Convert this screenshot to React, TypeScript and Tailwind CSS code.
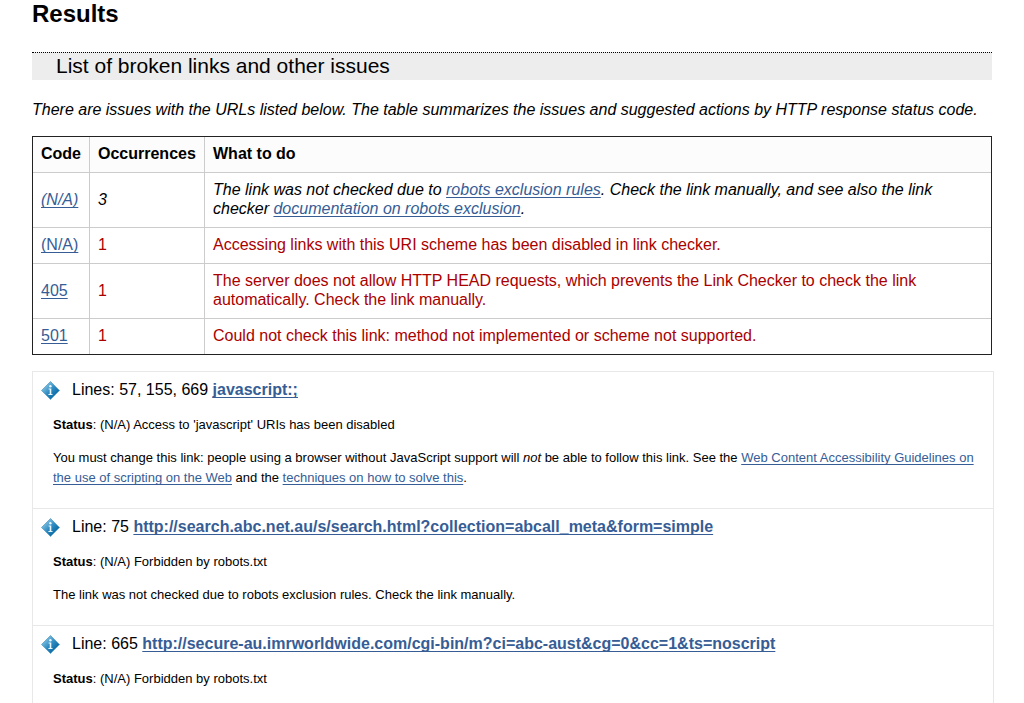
import type { ReactNode } from "react";

function Link({ children }: { children: ReactNode }) {
  return (
    <a
      href="#"
      className="text-[#365d95] underline decoration-1 underline-offset-2 [text-decoration-skip-ink:none] hover:text-[#1f3d68]"
    >
      {children}
    </a>
  );
}

function InfoIcon() {
  return (
    <svg viewBox="0 0 19 19" className="size-[19px] shrink-0" role="img" aria-label="Info">
      <defs>
        <linearGradient id="info-fill" x1="0" y1="0" x2="1" y2="1">
          <stop offset="0.2" stopColor="#7fbfe0" />
          <stop offset="0.5" stopColor="#2f8cc2" />
          <stop offset="0.8" stopColor="#0968a3" />
        </linearGradient>
      </defs>
      <path
        d="M9.5.5 18.5 9.5 9.5 18.5.5 9.5Z"
        fill="url(#info-fill)"
        stroke="#5b9fc6"
        strokeWidth="0.8"
        strokeLinejoin="round"
      />
      <circle cx="9.4" cy="5.2" r="1.2" fill="#e9f6fc" />
      <path d="M7.6 7.4h2.7v5.6h1.2v1.1H7.4v-1.1h1.3V8.5H7.6Z" fill="#e9f6fc" />
    </svg>
  );
}

type Row = { code: string; count: number; advice: ReactNode; tone: string };

const rows: Row[] = [
  {
    code: "(N/A)",
    count: 3,
    tone: "italic text-black",
    advice: (
      <>
        The link was not checked due to <Link>robots exclusion rules</Link>. Check the link manually, and see also the
        link checker <Link>documentation on robots exclusion</Link>.
      </>
    ),
  },
  {
    code: "(N/A)",
    count: 1,
    tone: "text-[#aa0000]",
    advice: "Accessing links with this URI scheme has been disabled in link checker.",
  },
  {
    code: "405",
    count: 1,
    tone: "text-[#aa0000]",
    advice:
      "The server does not allow HTTP HEAD requests, which prevents the Link Checker to check the link automatically. Check the link manually.",
  },
  {
    code: "501",
    count: 1,
    tone: "text-[#aa0000]",
    advice: "Could not check this link: method not implemented or scheme not supported.",
  },
];

type IssueProps = { lines: string; url: string; status: string; children?: ReactNode };

function Issue({ lines, url, status, children }: IssueProps) {
  return (
    <li className="border-b border-[#e8e8e8] px-2 pt-2 pb-5 last:border-b-0">
      <div className="flex items-center gap-3">
        <InfoIcon />
        <p className="leading-5">
          {lines}{" "}
          <strong>
            <Link>{url}</Link>
          </strong>
        </p>
      </div>
      <div className="mt-[15px] flex flex-col gap-[13px] pl-3 text-[13px] leading-5">
        <p>
          <strong>Status</strong>: (N/A) {status}
        </p>
        {children && <p>{children}</p>}
      </div>
    </li>
  );
}

export default function App() {
  return (
    <main className="h-screen overflow-hidden bg-white px-8 font-['Liberation_Sans',Arial,sans-serif] text-base text-black">
      <h2 className="text-2xl leading-7 font-bold">Results</h2>
      <h3 className="mt-6 border-t border-dotted border-black bg-[#ededed] px-6 pb-0.5 text-[21px] leading-[25px]">
        List of broken links and other issues
      </h3>
      <p className="mt-5 leading-5 italic">
        There are issues with the URLs listed below. The table summarizes the issues and suggested actions by HTTP
        response status code.
      </p>
      <table className="mt-4 w-full border-separate border-spacing-0 border border-[#222222] text-left leading-[19px]">
        <thead>
          <tr className="bg-[#fcfcfc]">
            <th className="w-[57px] border-r border-b border-[#cccccc] px-2 pt-[7px] pb-[9px]">Code</th>
            <th className="w-[115px] border-r border-b border-[#cccccc] px-2 pt-[7px] pb-[9px]">Occurrences</th>
            <th className="border-b border-[#cccccc] px-2 pt-[7px] pb-[9px]">What to do</th>
          </tr>
        </thead>
        <tbody>
          {rows.map((row, i) => (
            <tr key={i} className={row.tone}>
              <td className="border-r border-b border-[#cccccc] px-2 pt-[7px] pb-[9px] [tr:last-child>&]:border-b-0">
                <Link>{row.code}</Link>
              </td>
              <td className="border-r border-b border-[#cccccc] px-2 pt-[7px] pb-[9px] [tr:last-child>&]:border-b-0">
                {row.count}
              </td>
              <td className="border-b border-[#cccccc] px-2 pt-[7px] pr-12 pb-[9px] [tr:last-child>&]:border-b-0">
                {row.advice}
              </td>
            </tr>
          ))}
        </tbody>
      </table>
      <ul className="mt-4 -mr-0.5 border border-[#e8e8e8]">
        <Issue lines="Lines: 57, 155, 669" url="javascript:;" status="Access to 'javascript' URIs has been disabled">
          You must change this link: people using a browser without JavaScript support will <em>not</em> be able to
          follow this link. See the <Link>Web Content Accessibility Guidelines on the use of scripting on the Web</Link>{" "}
          and the <Link>techniques on how to solve this</Link>.
        </Issue>
        <Issue
          lines="Line: 75"
          url="http://search.abc.net.au/s/search.html?collection=abcall_meta&form=simple"
          status="Forbidden by robots.txt"
        >
          The link was not checked due to robots exclusion rules. Check the link manually.
        </Issue>
        <li className="px-2 pt-2 pb-10">
          <div className="flex items-center gap-3">
            <InfoIcon />
            <p className="leading-5">
              Line: 665{" "}
              <strong>
                <Link>http://secure-au.imrworldwide.com/cgi-bin/m?ci=abc-aust&cg=0&cc=1&ts=noscript</Link>
              </strong>
            </p>
          </div>
          <p className="mt-[15px] pl-3 text-[13px] leading-5">
            <strong>Status</strong>: (N/A) Forbidden by robots.txt
          </p>
        </li>
      </ul>
    </main>
  );
}
